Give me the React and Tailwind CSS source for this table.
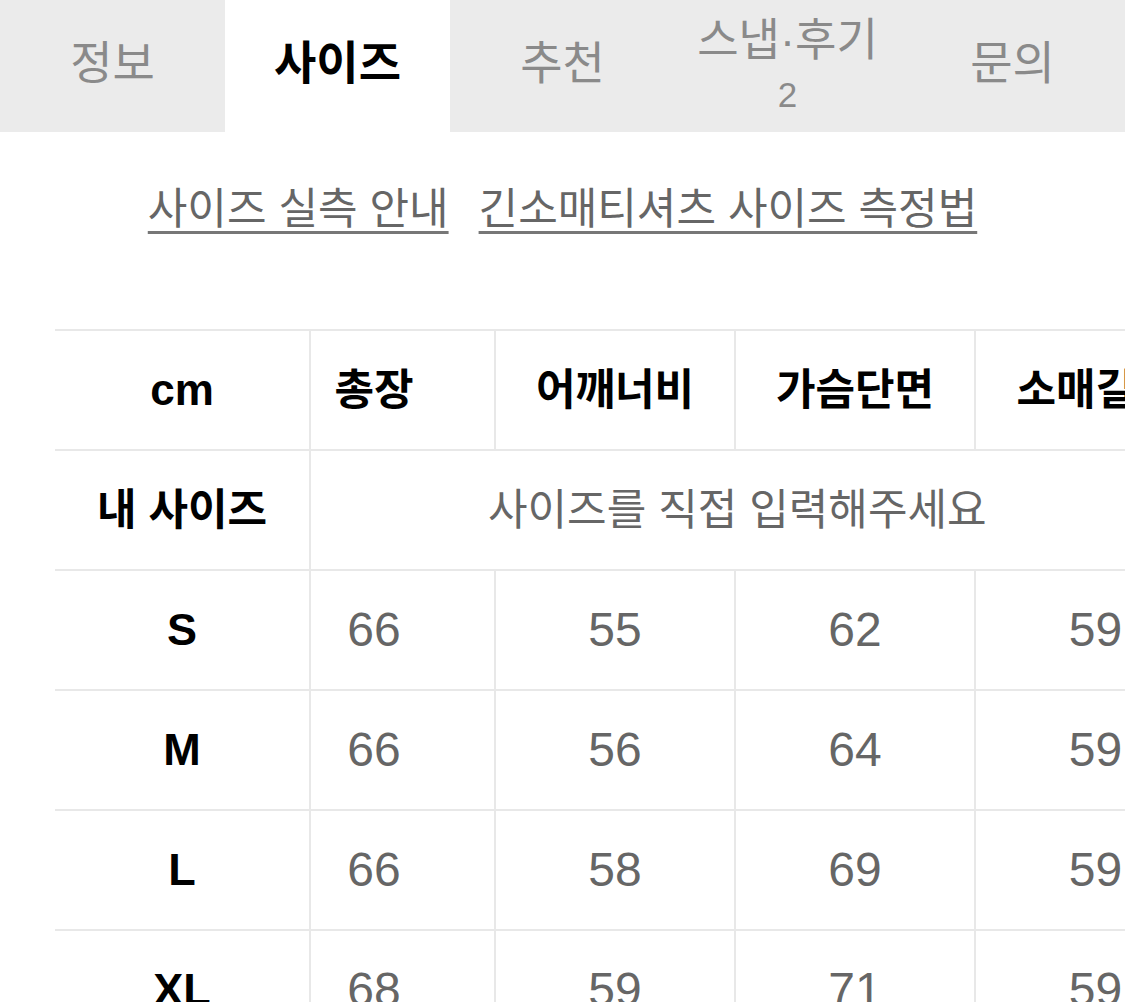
import React from 'react';

const tabs = [
    { label: '정보' },
    { label: '사이즈', active: true },
    { label: '추천' },
    { label: '스냅·후기', count: '2' },
    { label: '문의' },
];

const headers = ['총장', '어깨너비', '가슴단면', '소매길이'];

const rows = [
    { size: 'S', values: ['66', '55', '62', '59'] },
    { size: 'M', values: ['66', '56', '64', '59'] },
    { size: 'L', values: ['66', '58', '69', '59'] },
    { size: 'XL', values: ['68', '59', '71', '59'] },
];

const font = "font-['Liberation_Sans','Noto_Sans_CJK_KR',sans-serif]";

const App = () => {
    return (
        <div className={`w-[1125px] h-[1002px] overflow-hidden bg-white ${font}`}>

            {/* Tabs */}
            <div className="flex h-[132px] bg-[#ebebeb]">
                {tabs.map((tab) => (
                    <div
                        key={tab.label}
                        className={`flex w-[225px] flex-col items-center justify-center ${tab.active ? 'bg-white' : ''}`}
                    >
                        {tab.count ? (
                            <div className="flex flex-col items-center -mt-[1px]">
                                <span className="text-[45px] leading-[52px] text-[#8a8a8a]">{tab.label}</span>
                                <span className="mt-[7px] text-[35px] leading-[42px] text-[#8a8a8a]">{tab.count}</span>
                            </div>
                        ) : (
                            <span className={`text-[46px] leading-none -mt-[6px] ${tab.active ? 'font-bold text-black' : 'text-[#8a8a8a]'}`}>
                                {tab.label}
                            </span>
                        )}
                    </div>
                ))}
            </div>

            {/* Guide links */}
            <div className="flex justify-center gap-[30px] pt-[52px] text-[43px] leading-[50px] text-[#666]">
                <span className="underline decoration-[3px] underline-offset-[7px] decoration-[#777]">사이즈 실측 안내</span>
                <span className="underline decoration-[3px] underline-offset-[7px] decoration-[#777]">긴소매티셔츠 사이즈 측정법</span>
            </div>

            {/* Size table */}
            <div className="mt-[95px] pl-[55px] overflow-hidden">
                <table className="w-[1160px] table-fixed border-collapse">
                    <colgroup>
                        <col className="w-[255px]" />
                        <col className="w-[185px]" />
                        <col className="w-[240px]" />
                        <col className="w-[240px]" />
                        <col className="w-[240px]" />
                    </colgroup>
                    <thead>
                        <tr className="h-[120px] border-y-2 border-[#e8e8e8]">
                            <th className="text-[44px] font-bold text-black">cm</th>
                            {headers.map((h, i) => (
                                <th
                                    key={h}
                                    className={`border-l-2 border-[#e8e8e8] text-[43px] font-bold text-black whitespace-nowrap ${i === 0 ? 'pr-[57px]' : ''}`}
                                >
                                    {h}
                                </th>
                            ))}
                        </tr>
                    </thead>
                    <tbody>
                        <tr className="h-[120px] border-b-2 border-[#e8e8e8]">
                            <td className="text-center text-[43px] font-bold text-black">내 사이즈</td>
                            <td colSpan={4} className="border-l-2 border-[#e8e8e8] pl-[177px] text-left text-[43px] text-[#666] whitespace-nowrap">
                                사이즈를 직접 입력해주세요
                            </td>
                        </tr>
                        {rows.map((row) => (
                            <tr key={row.size} className="h-[120px] border-b-2 border-[#e8e8e8]">
                                <td className="text-center text-[45px] font-bold text-black">{row.size}</td>
                                {row.values.map((v, i) => (
                                    <td
                                        key={i}
                                        className={`border-l-2 border-[#e8e8e8] text-center text-[48px] text-[#666] ${i === 0 ? 'pr-[57px]' : ''}`}
                                    >
                                        {v}
                                    </td>
                                ))}
                            </tr>
                        ))}
                    </tbody>
                </table>
            </div>
        </div>
    );
};

export default App;
